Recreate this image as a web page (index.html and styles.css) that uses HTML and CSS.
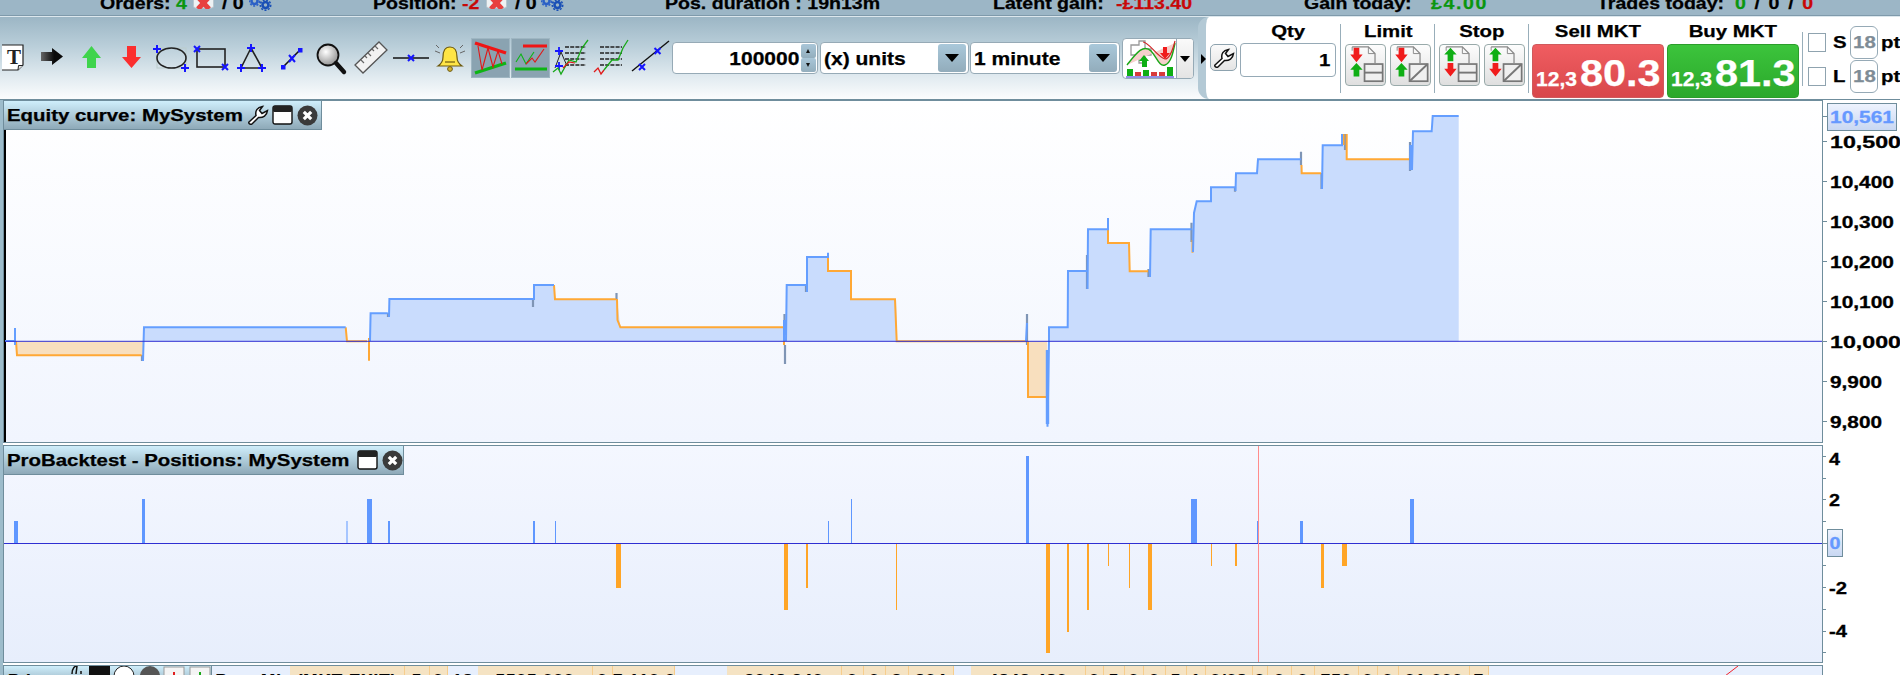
FILE: index.html
```html
<!DOCTYPE html>
<html lang="en">
<head>
<meta charset="utf-8">
<title>ProBacktest - MySystem</title>
<link rel="stylesheet" href="styles.css">
</head>
<body>
<svg class="defs" width="0" height="0">
  <symbol id="wrench" viewBox="0 0 22 20"><path d="M2 17 L9 10.5 C8 6 10 2.5 15.5 1.5 L12.5 5.5 L15 8.5 L20.5 5.5 C20 10.5 16 13 11.5 12.5 L5 19 C3.5 20 1 18.5 2 17Z" fill="#fff" stroke="#111" stroke-width="1.5"/></symbol>
  <symbol id="window" viewBox="0 0 21 20"><rect x="1" y="1" width="19" height="18" rx="2" fill="#fff" stroke="#111" stroke-width="1.4"/><rect x="1" y="1" width="19" height="6" rx="1.5" fill="#222"/></symbol>
  <symbol id="close" viewBox="0 0 21 21"><circle cx="10.5" cy="10.5" r="10" fill="#3a3a3a"/><path d="M6.8 6.8 L14.2 14.2 M14.2 6.8 L6.8 14.2" stroke="#fff" stroke-width="3.2"/></symbol>
  <symbol id="gear" viewBox="0 0 24 11"><circle cx="5.500" cy="1" r="3" fill="none" stroke="#2b60c6" stroke-width="2.500"/><circle cx="5.500" cy="1" r="5" fill="none" stroke="#2b60c6" stroke-width="1.500" stroke-dasharray="2 1.500"/><circle cx="16.500" cy="5" r="3" fill="none" stroke="#1a50b6" stroke-width="2.600"/><circle cx="16.500" cy="5" r="5.200" fill="none" stroke="#1a50b6" stroke-width="1.600" stroke-dasharray="2 1.500"/></symbol>
  <symbol id="xbtn" viewBox="0 9 21 9"><rect x="0.5" y="0" width="20" height="17" rx="2" fill="#eef2f4" stroke="#b9c7cf"/><path d="M5 6 L16 18 M16 6 L5 18" stroke="#e8403f" stroke-width="5"/></symbol>
  <symbol id="docbase" viewBox="0 0 40 42"><path d="M6 2 H23 L30 9 V19" fill="none" stroke="#888" stroke-width="1.3"/><path d="M23 2 V9 H30" fill="none" stroke="#888"/><path d="M6 2 V6" stroke="#888"/></symbol>
  <symbol id="arrows-rg" viewBox="0 0 40 42"><path d="M7.5 3 H13.5 V10 H17 L10.5 18 L4 10 H7.5Z" fill="#f01c1c"/><path d="M10.5 19 L17 26 H13.5 V33 H7.5 V26 H4Z" fill="#0fae14"/></symbol>
  <symbol id="arrows-gr" viewBox="0 0 40 42"><path d="M10.5 3 L17 10 H13.5 V17 H7.5 V10 H4Z" fill="#0fae14"/><path d="M7.5 19 H13.5 V25 H17 L10.5 33 L4 25 H7.5Z" fill="#f01c1c"/></symbol>
  <symbol id="box-eq" viewBox="0 0 40 42"><rect x="19" y="20" width="19" height="18" fill="#f0f0f0" stroke="#777" stroke-width="1.8"/><path d="M19 29 H38" stroke="#777" stroke-width="2"/></symbol>
  <symbol id="box-diag" viewBox="0 0 40 42"><rect x="19" y="20" width="19" height="18" fill="#f0f0f0" stroke="#777" stroke-width="1.8"/><path d="M19 38 L38 20" stroke="#777" stroke-width="2"/></symbol>
</svg>

<header class="status">
  <span class="sx">Orders:</span><span class="sx green">4</span><svg class="xb" width="21" height="9"><use href="#xbtn"/></svg><span class="sx">/ 0</span><svg class="gr" width="24" height="11"><use href="#gear"/></svg>
  <span class="sx">Position:</span><span class="sx red">-2</span><svg class="xb" width="21" height="9"><use href="#xbtn"/></svg><span class="sx">/ 0</span><svg class="gr" width="24" height="11"><use href="#gear"/></svg>
  <span class="sx">Pos. duration : 19h13m</span>
  <span class="sx">Latent gain:</span><span class="sx red">-£113.40</span>
  <span class="sx">Gain today:</span><span class="sx green spaced">£4.00</span>
  <span class="sx">Trades today:</span><span class="sx spaced"><b class="green">0</b> / 0 / <b class="red">0</b></span>
</header>

<section class="toolbar">
  <svg width="32" height="40"><path d="M0 7 H21 V27 L16 32 H0" fill="#fff" stroke="#222" stroke-width="1.2"/><path d="M16 32 L16.5 27.5 H21" fill="#ddd" stroke="#222"/><text class="serif" x="5" y="26">T</text></svg>
  <svg width="38" height="40"><defs><linearGradient id="ga" x1="0" x2="1"><stop offset="0" stop-color="#666"/><stop offset="0.6" stop-color="#0a0a0a"/></linearGradient></defs><path d="M7 14 H18 V10 L29 18.5 L18 27 V23 H7Z" fill="url(#ga)"/></svg>
  <svg width="40" height="40"><path d="M19.5 8 L29 20 H24 V30 H15 V20 H10Z" fill="#3fd44c"/></svg>
  <svg width="38" height="40"><path d="M15 8 H24 V19 H29 L19.5 30 L10 19 H15Z" fill="#fb2e2e"/></svg>
  <svg width="41" height="40"><rect x="7" y="10" width="29" height="20" fill="none" stroke="#bcc" /><ellipse cx="21.5" cy="20" rx="14.5" ry="10" fill="none" stroke="#222" stroke-width="1.6"/><path d="M7 7 V15 M3 11 H11 M35 26 V34 M31 30 H39" stroke="#1515ff" stroke-width="2"/></svg>
  <svg width="44" height="40"><rect x="6" y="11" width="28" height="18" fill="none" stroke="#222" stroke-width="1.6"/><path d="M3 8 L9 14 M9 8 L3 14 M31 26 L37 32 M37 26 L31 32" stroke="#1515ff" stroke-width="2"/></svg>
  <svg width="41" height="40"><path d="M16 10 L6 30 H27Z" fill="none" stroke="#222" stroke-width="1.6"/><path d="M16 6 V14 M12 10 H20 M6 26 V34 M2 30 H10 M27 26 V34 M23 30 H31" stroke="#1515ff" stroke-width="2"/></svg>
  <svg width="34" height="40"><path d="M7 29 L24 12" stroke="#111" stroke-width="1.6"/><rect x="5" y="27" width="4.5" height="4.5" fill="#1515ff"/><rect x="22" y="10" width="4.5" height="4.5" fill="#1515ff"/><path d="M13 17 L19 24 M19 17 L13 24" stroke="#1515ff" stroke-width="2"/></svg>
  <svg width="40" height="40"><defs><radialGradient id="gm" cx="0.4" cy="0.35" r="0.7"><stop offset="0" stop-color="#fff"/><stop offset="1" stop-color="#8d8d8d"/></radialGradient></defs><circle cx="18" cy="17" r="10.5" fill="url(#gm)" stroke="#111" stroke-width="1.8"/><path d="M26 25 L34 34" stroke="#111" stroke-width="4.4" stroke-linecap="round"/></svg>
  <svg width="41" height="40"><path d="M5 27 L29 4 L37 12 L13 35Z" fill="#f2f2f2" stroke="#555" stroke-width="1.3"/><path d="M11 22 L14 25 M15 18 L17 20 M18 15 L21 18 M22 11 L24 13 M25 8 L28 11" stroke="#666" stroke-width="1.2"/></svg>
  <svg width="41" height="40"><path d="M2 20 H38" stroke="#111" stroke-width="1.5"/><path d="M17 17 L23 23 M23 17 L17 23" stroke="#1515ff" stroke-width="2"/></svg>
  <svg width="37" height="40"><path d="M18 9 C23 9 25 13 25 19 C25 24 27 26 30 28 H6 C9 26 11 24 11 19 C11 13 13 9 18 9Z" fill="#ffe545" stroke="#6d5a10" stroke-width="1.2"/><path d="M13 24 H23" stroke="#6d5a10" stroke-width="1.2"/><circle cx="18" cy="31" r="2.4" fill="#d4b32c" stroke="#6d5a10"/><path d="M7 10 L4 7 M8 15 L3 13 M28 10 L31 7 M28 15 L33 13" stroke="#666" stroke-width="1"/></svg>
  <svg class="active first" width="39" height="40"><path d="M4 5 L35 15" stroke="#f01515" stroke-width="3.4"/><path d="M4 35 L35 25" stroke="#0cb514" stroke-width="3.4"/><path d="M7 8 L11 32 L17 10 L22 29 L27 13 L31 26" fill="none" stroke="#e01818" stroke-width="1.1"/></svg>
  <svg class="active" width="39" height="40"><path d="M12 8 H36" stroke="#f01515" stroke-width="3"/><path d="M4 31 H36" stroke="#0cb514" stroke-width="3"/><path d="M5 24 L10 16 L15 26 L23 14" fill="none" stroke="#0cb514" stroke-width="1.1"/><path d="M15 26 L21 20 L24 24 L33 11" fill="none" stroke="#e01818" stroke-width="1.1"/></svg>
  <svg width="41" height="40"><path d="M10 14 L4 30 M10 14 L16 28" fill="none" stroke="#222"/><path d="M8 9 V17 M4 13 H12 M8 24 V32 M4 28 H12" stroke="#1515ff" stroke-width="1.8"/><path d="M14 9 H35 M14 15 H35 M14 21 H35 M14 27 H35" stroke="#222" stroke-width="1.4" stroke-dasharray="4 1.2"/><path d="M2 34 L7 30 L10 36 L18 22 L25 24 L31 10 L37 2" fill="none" stroke="#18a818" stroke-width="1.3"/><path d="M12 30 L18 24 L24 25" fill="none" stroke="#e01818" stroke-width="1.2"/></svg>
  <svg width="38" height="40"><path d="M8 9 H30 M8 15 H30 M8 21 H30 M8 27 H30" stroke="#222" stroke-width="1.4" stroke-dasharray="4 1.2"/><path d="M2 34 L6 30 L9 36 L12 32" fill="none" stroke="#e01818" stroke-width="1.3"/><path d="M12 32 L20 22 L26 22 L31 10 L36 2" fill="none" stroke="#18a818" stroke-width="1.3"/></svg>
  <svg width="41" height="40"><path d="M2 33 L39 3" stroke="#111" stroke-width="1.4"/><path d="M9 26 L15 32 M15 26 L9 32 M24.500 10 L30.500 16 M30.500 10 L24.500 16" stroke="#1515ff" stroke-width="2"/></svg>

  <div class="field spin"><span class="sxr">100000</span><div class="spinbtns"><i class="up"></i><i class="down"></i></div></div>
  <div class="field select"><span class="sx">(x) units</span><b class="drop"></b></div>
  <div class="field select"><span class="sx">1 minute</span><b class="drop"></b></div>
  <div class="indicator">
    <svg width="53" height="39"><path d="M8 6 H16 V2 H22 V10 H28 V16 H22 V24 H16 V16 H8Z" fill="#fff" stroke="#999" stroke-width="1.3"/><path d="M4 26 C12 16 20 4 28 12 C34 18 36 28 42 26 C48 24 50 14 52 4" fill="#f6d0cc" stroke="#18a818" stroke-width="1.4"/><path d="M20 3 C26 3 34 18 42 20 C47 20 50 10 52 2" fill="none" stroke="#d02525" stroke-width="1.2"/><path d="M40 8 H44 V14 H47 L42 20 L37 14 H40Z" fill="#f01c1c"/><path d="M21 16 L26 22 H24 V28 H19 V22 H16Z" fill="#0fae14"/><path d="M4 30 H10 V37 H4Z M20 31 H26 V37 H20Z M44 28 H50 V37 H44Z" fill="#0fae14"/><path d="M12 33 H18 V37 H12Z M28 33 H34 V37 H28Z M36 33 H42 V37 H36Z" fill="#d93a3a"/><path d="M3 38 H51" stroke="#2525c8"/></svg>
    <span class="ind-arrow"></span>
  </div>

  <div class="panel">
    <div class="cell-wrench"><svg width="22" height="20"><use href="#wrench"/></svg></div>
    <div class="col col-qty"><div class="lbl"><span class="sxc">Qty</span></div><div class="qty"><span class="sxr">1</span></div></div>
    <i class="sep"></i>
    <div class="col col-order"><div class="lbl"><span class="sxc">Limit</span></div><div class="pair">
      <div class="docbtn"><svg width="39" height="40"><use href="#docbase"/><use href="#box-eq"/><use href="#arrows-rg"/></svg></div>
      <div class="docbtn"><svg width="39" height="40"><use href="#docbase"/><use href="#box-diag"/><use href="#arrows-rg"/></svg></div>
    </div></div>
    <i class="sep"></i>
    <div class="col col-order"><div class="lbl"><span class="sxc">Stop</span></div><div class="pair">
      <div class="docbtn"><svg width="39" height="40"><use href="#docbase"/><use href="#box-eq"/><use href="#arrows-gr"/></svg></div>
      <div class="docbtn"><svg width="39" height="40"><use href="#docbase"/><use href="#box-diag"/><use href="#arrows-gr"/></svg></div>
    </div></div>
    <i class="sep"></i>
    <div class="col col-mkt"><div class="lbl"><span class="sxc">Sell MKT</span></div><div class="mkt sell"><span class="small">12,3</span><span class="big">80.3</span></div></div>
    <div class="col col-mkt"><div class="lbl"><span class="sxc">Buy MKT</span></div><div class="mkt buy"><span class="small">12,3</span><span class="big">81.3</span></div></div>
    <i class="sep sep-short"></i>
    <div class="sl">
      <div class="sl-row"><i class="check"></i><span class="sl-key sx">S</span><span class="ptbox"><span class="sxc">18</span></span><span class="sx">pt</span></div>
      <div class="sl-row"><i class="check"></i><span class="sl-key sx">L</span><span class="ptbox"><span class="sxc">18</span></span><span class="sx">pt</span></div>
    </div>
  </div>
</section>

<main class="charts">
  <section class="pane pane-equity">
    <div class="plot plot-equity">
      <div class="title title-eq"><span class="sx t-eq">Equity curve: MySystem</span>
        <svg width="22" height="20"><use href="#wrench"/></svg><svg class="tw" width="21" height="20"><use href="#window"/></svg><svg class="tc" width="21" height="21"><use href="#close"/></svg></div>
      <svg class="plotsvg" width="1818" height="341" viewBox="4 101 1818 341">
        <rect x="4" y="130" width="2" height="312" fill="#000"/>
        <path class="fill-blue" d="M144 341.300 V327.300 H346 L347 341.300 H370 L371 313.300 H389 V299 H534 V285 H555 V299.300 H617 L620.400 327.300 H786 V285 H807 V257 H828 V271 H851 V299.300 H896 L897 341.300 H1049 V327.300 H1068 V271 H1088 V229.300 H1108 V243 H1129.700 V271.300 H1150 V229.300 H1193 L1194 213 L1196.700 201.300 H1211 V187.300 H1236 V173.300 H1258 V159.300 H1301.700 V173.300 H1322.700 V145.300 H1343 V134 H1346.700 V159.300 H1412 V131.300 H1432.700 V116 H1458.700 V341.300Z"/>
        <path class="fill-orange" d="M17 341.300 V355.300 H143 V341.300Z M1028 341.300 V397 H1047 V341.300Z"/>
        <path class="ln grey" d="M142 355 V361 M388 313 V317 M533 299 V307 M616.500 293 V300 M784.500 314 V328 M785 345 V364 M806 285 V292 M1027 314 V345 M1087 255 V289 M1148.500 269 V277 M1191.500 222.700 V242 M1235 187 V191.700 M1301 151.700 V165 M1321.500 173 V189 M1345 134 V150 M1410 142 V171"/>
        <path class="ln orange" d="M16 341 L17 355.300 H141.600 M345.700 327.300 L347 341.300 H367 M369 338 V360.700 M554 285 L555 299.300 H616 M617 299 L617.500 320 L620.400 327.300 H783 M784 327 V345 M828 253 V271 H851 V299.300 H895 L896.700 341.300 H1026 M1028 341 V397 H1046 M1108 225 V243 H1129 L1129.700 271.300 H1148 M1192.500 240 V252.700 M1301.500 165 L1301.700 173.300 H1321 M1343.500 134 V145 M1346.700 134 V159.300 H1409"/>
        <path class="ln blue" d="M5 341 H15 V328 V345 M143 361 L144 327.300 H345.700 M370 341 L370.600 313.300 H387.800 M389 317 L389.400 299 H533 M534 300 V285 H554 M784 320 V341 M786 341 L786.700 285 H806 M807 292 V257 H828 V252.700 M1026 341 L1027 323 M1047 397 L1047.500 426.700 L1049 341 V327.300 H1067.700 L1068 271 H1087 M1087.500 289 L1088 229.300 H1108 V218 M1150 277 L1150.700 229.300 H1191.700 M1193 252 L1194 213 L1196.700 201.300 H1211 V187.300 H1235 M1235.500 191 L1236 173.300 H1257 L1258 159.300 H1301 M1322 189 L1322.700 145.300 H1342 V134 M1412 170 L1413 131.300 H1431.700 L1432.700 116 H1458.700"/>
        <path class="ln blue fat" d="M1047.500 350 V424 M1411 145 V170 M785 320 V335"/>
        <path class="base" d="M5 341.300 H1822"/>
      </svg>
    </div>
    <svg class="axis" width="77" height="343" viewBox="1823 100 77 343">
      <defs><linearGradient id="gv" x1="0" y1="0" x2="0" y2="1"><stop offset="0" stop-color="#eef3fe"/><stop offset="1" stop-color="#c8d7f2"/></linearGradient></defs>
      <path class="tick" d="M1823 116.500 H1827 M1823 141.500 H1827 M1823 181.500 H1827 M1823 221.500 H1827 M1823 261.500 H1827 M1823 301.500 H1827 M1823 341.500 H1827 M1823 381.500 H1827 M1823 421.500 H1827"/>
      <rect class="valbox" x="1827.500" y="103.500" width="69" height="27" fill="url(#gv)"/>
      <text class="ax val" x="1830" y="123" textLength="64" lengthAdjust="spacingAndGlyphs">10,561</text>
      <text class="ax" x="1830" y="148" textLength="71" lengthAdjust="spacingAndGlyphs">10,500</text>
      <text class="ax" x="1830" y="188" textLength="64" lengthAdjust="spacingAndGlyphs">10,400</text>
      <text class="ax" x="1830" y="228" textLength="64" lengthAdjust="spacingAndGlyphs">10,300</text>
      <text class="ax" x="1830" y="268" textLength="64" lengthAdjust="spacingAndGlyphs">10,200</text>
      <text class="ax" x="1830" y="308" textLength="64" lengthAdjust="spacingAndGlyphs">10,100</text>
      <text class="ax" x="1830" y="348" textLength="71" lengthAdjust="spacingAndGlyphs">10,000</text>
      <text class="ax" x="1830" y="388" textLength="52" lengthAdjust="spacingAndGlyphs">9,900</text>
      <text class="ax" x="1830" y="428" textLength="52" lengthAdjust="spacingAndGlyphs">9,800</text>
    </svg>
  </section>

  <section class="pane pane-pos">
    <div class="plot plot-pos">
      <div class="title title-pos"><span class="sx t-pos">ProBacktest - Positions: MySystem</span>
        <svg class="tw" width="21" height="20"><use href="#window"/></svg><svg class="tc" width="21" height="21"><use href="#close"/></svg></div>
      <svg class="plotsvg" width="1818" height="216" viewBox="4 446 1818 216">
        <g class="up">
          <rect x="14" y="521" width="4" height="22"/><rect x="142" y="499" width="3" height="44"/><rect x="346.500" y="521" width="1" height="22"/><rect x="367" y="499" width="5" height="44"/><rect x="388" y="521" width="2" height="22"/><rect x="533" y="521" width="2" height="22"/><rect x="555" y="521" width="1" height="22"/><rect x="828" y="521" width="1" height="22"/><rect x="851" y="499" width="1" height="44"/><rect x="1026" y="456" width="3" height="87"/><rect x="1191" y="499" width="6" height="44"/><rect x="1257" y="521" width="1.500" height="22"/><rect x="1300" y="521" width="3" height="22"/><rect x="1410" y="499" width="4" height="44"/>
        </g>
        <g class="down">
          <rect x="616" y="544" width="5" height="44"/><rect x="784" y="544" width="4" height="66"/><rect x="806" y="544" width="2" height="44"/><rect x="896" y="544" width="1" height="66"/><rect x="1046" y="544" width="4" height="109"/><rect x="1067" y="544" width="2" height="88"/><rect x="1087" y="544" width="2" height="66"/><rect x="1108" y="544" width="1" height="22"/><rect x="1129" y="544" width="1" height="44"/><rect x="1148" y="544" width="4" height="66"/><rect x="1211" y="544" width="1" height="22"/><rect x="1235" y="544" width="2" height="22"/><rect x="1321" y="544" width="3" height="44"/><rect x="1342" y="544" width="5" height="22"/>
        </g>
        <path class="base" d="M4 543.500 H1822"/>
        <path class="cursor" d="M1258.500 446 V662"/>
      </svg>
    </div>
    <svg class="axis" width="77" height="218" viewBox="1823 445 77 218">
      <path class="tick" d="M1823 456.500 H1826 M1823 478.500 H1826 M1823 499.500 H1826 M1823 521.500 H1826 M1823 543.500 H1827 M1823 565.500 H1826 M1823 587.500 H1826 M1823 609.500 H1826 M1823 631.500 H1826 M1823 652.500 H1826"/>
      <rect class="valbox" x="1827.500" y="529.500" width="15" height="27" fill="url(#gv)"/>
      <text class="ax" x="1829" y="465" textLength="11" lengthAdjust="spacingAndGlyphs">4</text>
      <text class="ax" x="1829" y="506" textLength="11" lengthAdjust="spacingAndGlyphs">2</text>
      <text class="ax val" x="1829.500" y="549" textLength="11" lengthAdjust="spacingAndGlyphs">0</text>
      <text class="ax" x="1829" y="594" textLength="18" lengthAdjust="spacingAndGlyphs">-2</text>
      <text class="ax" x="1829" y="637" textLength="18" lengthAdjust="spacingAndGlyphs">-4</text>
    </svg>
  </section>

  <section class="pane pane-price">
    <div class="plot plot-price">
      <div class="ph"><span class="ph-name">Prices</span>
        <svg width="142" height="10"><path d="M3 8 C3 2 6 0 8 0 L7 8 M12 5 V8" fill="none" stroke="#111" stroke-width="1.500"/><rect x="20" y="0" width="21" height="10" fill="#111"/><circle cx="55" cy="10" r="10" fill="#fff" stroke="#222" stroke-width="1"/><circle cx="81" cy="10" r="10" fill="#555"/><rect x="95" y="1" width="20" height="10" fill="#f4f4f4" stroke="#999"/><rect x="104" y="6" width="2" height="4" fill="#e02020"/><rect x="121" y="1" width="20" height="10" fill="#f4f4f4" stroke="#999"/><rect x="130" y="6" width="2" height="4" fill="#18a818"/></svg>
      </div>
      <div class="rows">
        <span class="c-b">Pos. Mk</span><span>(MKT EXIT)</span><span>5</span><span>0</span><span class="c-b">18</span><span>5505 000</span><span>0</span><span>7 110.0</span><span class="c-b"></span><span>2048 240</span><span>0</span><span>0</span><span>3</span><span>304</span><span class="c-b"></span><span>4843 480</span><span>0</span><span>5</span><span>0</span><span>0</span><span>5</span><span>1</span><span>0/08</span><span>0</span><span>0</span><span>0</span><span>750</span><span>0</span><span>0</span><span>01 000</span><span>7</span>
      </div>
      <svg class="diag" width="14" height="10"><path d="M0 10 L13 0" stroke="#f0202a" stroke-width="1"/></svg>
    </div>
  </section>
</main>
</body>
</html>
```

FILE: styles.css
```css
* { box-sizing: border-box; }
html, body { margin: 0; height: 675px; overflow: hidden; background: #fff; }
body {
  width: 1900px;
  font: bold 17px/17px "Liberation Sans", Arial, sans-serif;
  color: #000;
  -webkit-text-stroke: 0.25px currentColor;
}
.defs { display: none; }
svg { display: block; flex: none; }

.sx, .sxr, .sxc { display: inline-block; white-space: nowrap; transform: scaleX(1.2); }
.sx { transform-origin: 0 50%; }
.sxr { transform-origin: 100% 50%; }
.sxc { transform-origin: 50% 50%; }
.green { color: #0a960f; font-weight: bold; }
.red { color: #c80808; font-weight: bold; }
.spaced { letter-spacing: 1.4px; }

/* status strip */
.status {
  display: grid;
  grid-template-columns: 76px 17px 29px 27px 124px 89px 24px 29px 26px 124px 328px 122.5px 188.5px 127px 166px 138px 1fr;
  height: 16px;
  padding-left: 100px;
  overflow: hidden;
  background: #9cb6c6;
  border-bottom: 1px solid #7f9aab;
}
.status .sx { margin-top: -5px; transform: scaleX(1.15); }

/* toolbar */
.toolbar {
  display: flex;
  align-items: center;
  height: 84px;
  padding-left: 2px;
  background: linear-gradient(#9cb6c5, #b9ced9 35%, #e3ecf1 75%, #fbfcfd);
  border-top: 1px solid #dce7ed;
  border-bottom: 1px solid #6f8d9c;
}
.active { background: #8aa3b1; outline: 1px solid #9fb6c2; outline-offset: -1px; }
.active.first { margin-left: 2px; margin-right: 1px; }
.active + svg:not(.active) { margin-left: 1px; }
.serif { font: bold 21px "Liberation Serif", serif; fill: #222; }

.field {
  display: flex;
  align-items: center;
  height: 32px;
  background: #fff;
  border: 1px solid #96aab6;
  border-radius: 4px;
}
.field > span { margin-top: 2px; }
.spin { width: 146px; margin-left: 1px; padding-right: 1px; justify-content: flex-end; }
.spin > span { margin-right: 2px; font-size: 17.5px; }
.spinbtns { display: flex; flex-direction: column; width: 15px; height: 28px; }
.spinbtns i { position: relative; flex: 1; background: linear-gradient(#a9c6d8, #93aebd); border-radius: 2px; }
.spinbtns i::after {
  content: ""; position: absolute; left: 5px; top: 5px;
  border: 2.5px solid transparent; border-top: 0; border-bottom: 4px solid #111;
}
.spinbtns i.down::after { border-bottom: 0; border-top: 4px solid #111; }
.select { width: 149px; margin-left: 2px; padding-left: 3px; justify-content: space-between; padding-right: 2px; font-size: 17.5px; }
.select + .select { width: 150px; margin-left: 1px; }
.drop {
  position: relative; width: 28px; height: 28px;
  background: linear-gradient(#a9c8da, #92acbb); border-radius: 3px;
}
.drop::after {
  content: ""; position: absolute; left: 7px; top: 10px;
  border: 7px solid transparent; border-bottom: 0; border-top: 8px solid #000;
}
.indicator {
  display: flex;
  align-items: center;
  width: 72px; height: 41px; margin-left: 1.500px;
  background: #fff;
  border: 1px solid #96aab6;
  border-radius: 4px;
}
.ind-arrow {
  position: relative; flex: 1; align-self: stretch;
  background: linear-gradient(#fafafa, #e4e4e4);
  border-left: 1px solid #96aab6;
  border-radius: 0 3px 3px 0;
}
.ind-arrow::after {
  content: ""; position: absolute; left: 3px; top: 17px;
  border: 5.500px solid transparent; border-bottom: 0; border-top: 6px solid #000;
}

/* order panel */
.panel {
  position: relative;
  display: flex;
  align-self: stretch;
  width: 702px;
  margin-left: 4.500px;
  padding-bottom: 1px;
  background: #fff;
  border-left: 8px solid #b3c9d5;
  border-radius: 11px 0 0 11px;
  overflow: visible;
}
.panel > * { flex: none; }
.panel::before {
  content: ""; position: absolute; left: -5px; top: 37px;
  border: 5.500px solid transparent; border-right: 0; border-left: 5px solid #000;
}
.cell-wrench {
  display: flex; align-items: center; justify-content: center;
  width: 27px; height: 27px; margin: 27px 3px 0 4px;
  background: linear-gradient(#fafafa, #e4e4e4);
  border: 1px solid #8da2ae; border-radius: 5px;
}
.col { display: flex; flex-direction: column; padding-top: 6px; }
.lbl { height: 21px; line-height: 18px; text-align: center; }
.col-qty { width: 96px; margin-right: 4px; }
.col-qty .qty {
  display: flex; justify-content: flex-end; align-items: center;
  height: 34px; margin-top: -1px; padding-right: 5px;
  border: 1px solid #96aab6; border-radius: 4px;
}
.sep { width: 1px; height: 69px; margin-top: 7px; background: #98aeba; }
.col-order { width: 86px; margin: 0 3px 0 4px; }
.pair { display: flex; justify-content: space-between; }
.docbtn {
  width: 41px; height: 42px;
  background: linear-gradient(#fdfdfd, #dfdfdf);
  border: 1px solid #9aa; border-radius: 4px;
}
.col-mkt { width: 132px; margin-left: 3px; }
.mkt {
  display: flex; align-items: baseline;
  height: 54px; padding: 11px 0 0 3px;
  color: #fff; border-radius: 4px;
}
.sell { background: linear-gradient(#f05d61, #d8474b); border: 1px solid #d0595c; }
.buy { background: linear-gradient(#3cc43c, #2ba82b); border: 1px solid #2b9d2b; }
.small { display: inline-block; width: 44px; font-size: 19.5px; transform: scaleX(1.08); transform-origin: 0 50%; }
.big { display: inline-block; font-size: 36px; line-height: 36px; transform: scaleX(1.15); transform-origin: 0 50%; }
.sep-short { height: 54px; margin: 15px 0 0 3px; }
.sl { width: 92px; margin-left: 5px; padding-top: 8px; overflow: hidden; }
.sl-row { display: flex; align-items: center; height: 34px; }
.check { width: 18px; height: 19px; border: 1px solid #8fa3af; flex: none; }
.sl-key { width: 17px; margin-left: 7px; flex: none; }
.ptbox {
  display: flex; align-items: center; justify-content: center;
  width: 28px; height: 33px; margin-right: 3px; color: #7e8c96;
  border: 1px solid #96aab6; border-radius: 6px; flex: none;
}

/* chart panes */
.charts { border-left: 3px solid #9dbccb; }
.pane { display: flex; }
.pane-pos { margin-top: 2px; }
.pane-price { margin-top: 2px; }
.plot { position: relative; width: 1820px; border: 1px solid #6f8d9c; }
.plot-equity { height: 343px; background: linear-gradient(#fff, #f1f5fe); }
.plot-pos { height: 218px; background: linear-gradient(#f4f7ff, #e7eefc); }
.plot-price { display: flex; height: 20px; background: #e7effd; }
.title {
  position: absolute; left: -1px; top: -1px; z-index: 1;
  display: flex; align-items: center;
  height: 30px;
  padding-left: 3px;
  background: linear-gradient(#cfeefb, #8ea9b8);
  border: 1px solid #6f8d9c;
}
.title-eq { width: 319px; }
.title-pos { width: 401px; }
.t-eq { width: 240px; }
.t-pos { width: 348px; }
.tw { margin-left: 3px; }
.tc { margin-left: 4px; }
.plotsvg { overflow: hidden; }
.axis { overflow: hidden; }

.fill-blue { fill: #c9dcfd; }
.fill-orange { fill: #f8dfbe; }
.ln { fill: none; stroke-width: 2; }
.blue { stroke: #649eff; }
.fat { stroke-width: 3.4; }
.orange { stroke: #ffa835; }
.grey { stroke: #7f95b5; stroke-width: 2.2; }
.base { stroke: #2f2fd2; stroke-width: 1; fill: none; }
.up rect { fill: #5f97ff; }
.down rect { fill: #ffa526; }
.cursor { stroke: #ff8c8c; stroke-width: 1; fill: none; }
.tick { stroke: #6f8d9c; stroke-width: 1; fill: none; }
.valbox { stroke: #6f8d9c; stroke-width: 1; }
.ax { font: bold 17px "Liberation Sans", Arial, sans-serif; fill: #000; stroke: currentColor; stroke-width: 0.3px; }
.ax.val { fill: #6699ff; stroke: #6699ff; }

/* price strip */
.ph {
  display: flex;
  width: 208px; height: 20px;
  padding-left: 4px;
  background: linear-gradient(#cfeefb, #8ea9b8);
  border-right: 1px solid #6f8d9c;
  overflow: hidden;
}
.ph-name { width: 62px; padding-top: 6px; }
.rows {
  display: grid;
  grid-template-columns: 78px 115px 25px 18px 30px 115px 20px 62px 52px 115px 22px 22px 23px 45px 17px 115px 18px 21px 19px 22px 21px 19px 47px 15px 24px 23px 44px 19px 21px 71px 19px;
  height: 20px;
  overflow: hidden;
}
.rows span {
  padding-top: 6px;
  letter-spacing: 1px;
  text-align: center;
  white-space: nowrap;
  overflow: hidden;
  background: #f5e3c3;
  border-right: 1px solid #f7cd8c;
}
.rows span.c-b { background: #e7effd; border-right: 0; }
.diag { position: absolute; left: 1721px; top: 0; }
```
